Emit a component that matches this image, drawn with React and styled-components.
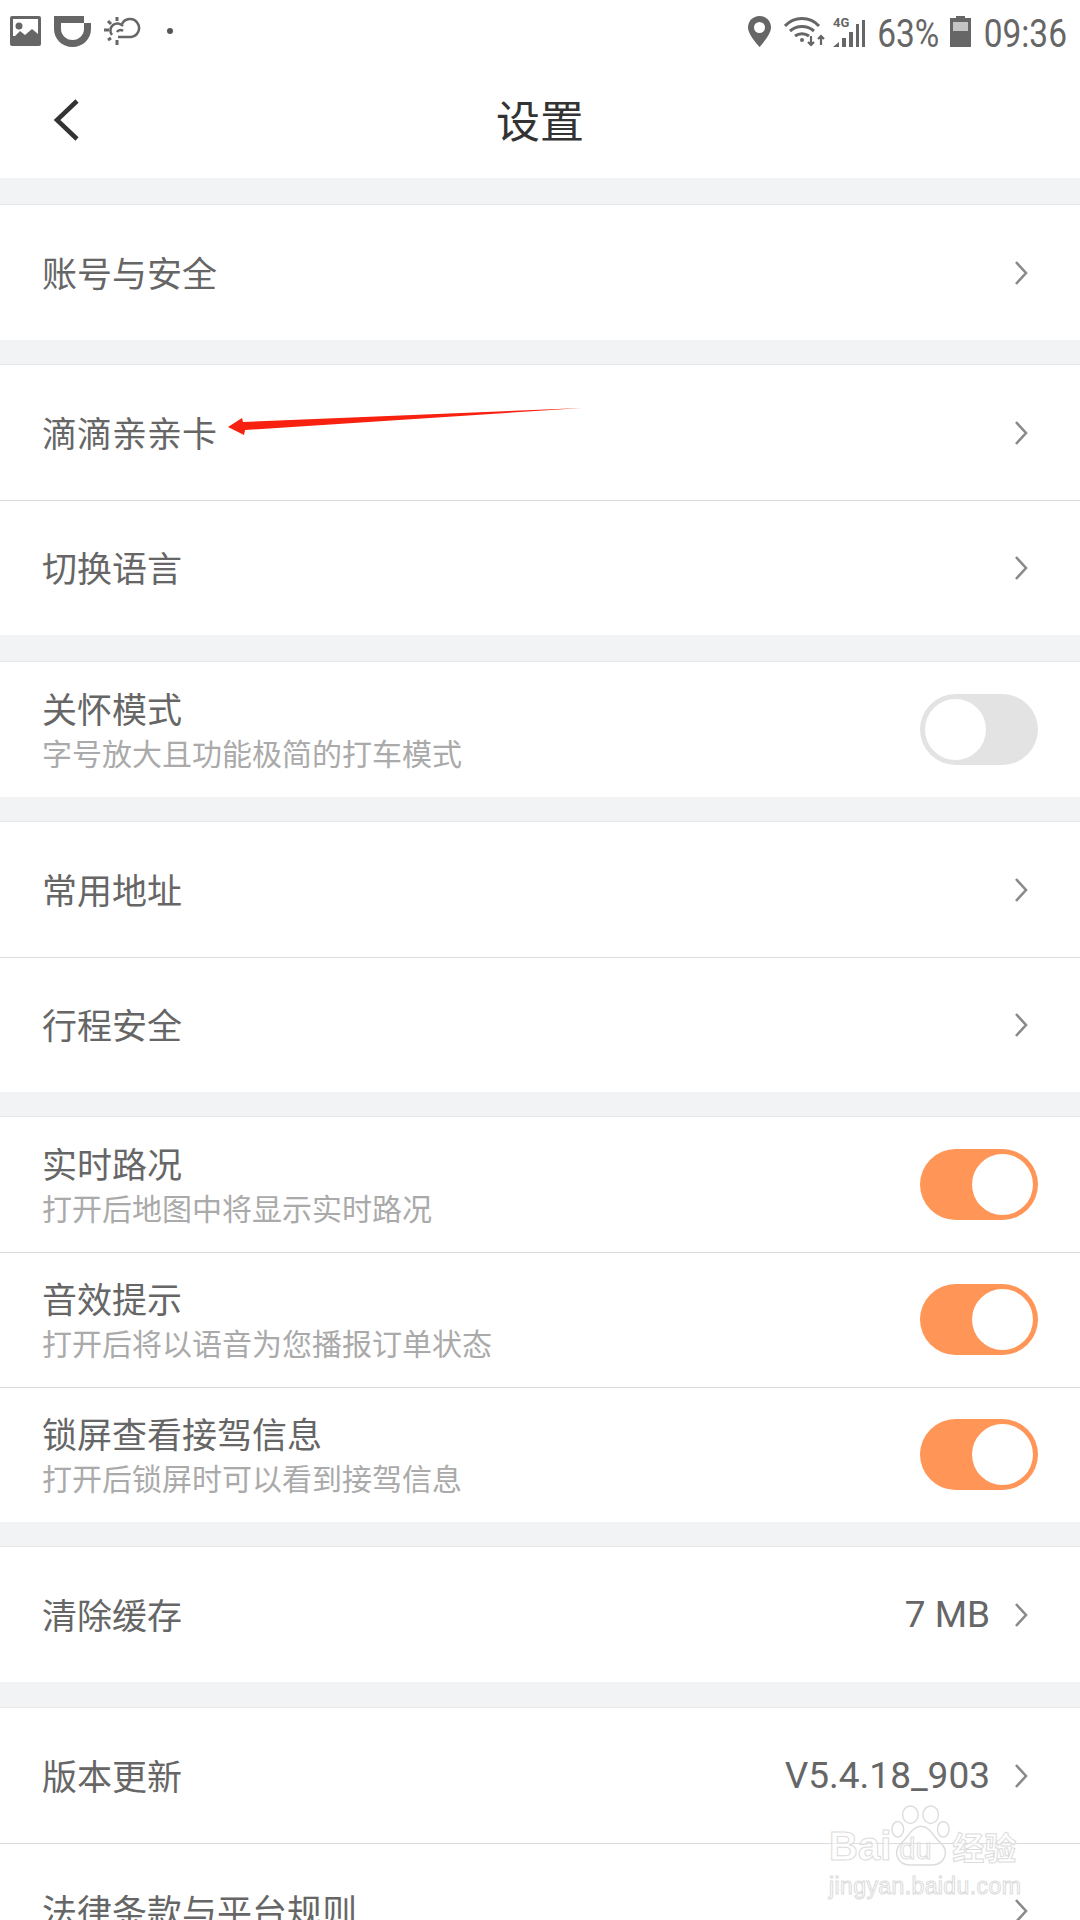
import React from 'react'
import styled, { createGlobalStyle } from 'styled-components'

const GlobalStyle = createGlobalStyle`
  html, body { margin: 0; padding: 0; background: #fff; }
  body { font-family: "Noto Sans CJK SC", "Noto Sans", sans-serif; }
`

const Page = styled.div`
  position: relative;
  width: 1080px;
  height: 1920px;
  overflow: hidden;
  background: #f2f3f5;
`
const Top = styled.div`
  background: #fff;
  height: 178px;
`
const StatusBar = styled.div`
  height: 62px;
  display: flex;
  justify-content: space-between;
  align-items: center;
  padding: 0 12px 0 10px;
`
const StatusGroup = styled.div`
  display: flex;
  align-items: center;
  gap: ${({ $gap }) => $gap}px;
`
const StatusText = styled.span`
  font-family: Roboto, sans-serif;
  font-size: 38px;
  line-height: 40px;
  color: #666;
  display: inline-block;
  transform: scaleX(0.88);
  margin: 5px -5px 0;
`
const NavBar = styled.div`
  position: relative;
  height: 116px;
  display: flex;
  align-items: center;
  justify-content: center;
`
const BackIcon = styled.svg`
  position: absolute;
  left: 52px;
  top: 36px;
`
const Title = styled.h1`
  margin: 0;
  font-size: 44px;
  font-weight: 400;
  color: #333;
  position: relative;
  top: -1px;
`
const Group = styled.section`
  margin-top: ${({ $gap }) => $gap || 26}px;
  background: #fff;
  border-top: 1px solid #e8e8e8;
  margin-bottom: -1px;
`
const Row = styled.div`
  box-sizing: border-box;
  height: 135px;
  padding: 0 52px 0 42px;
  display: flex;
  align-items: center;
  justify-content: space-between;
  & + & { box-shadow: inset 0 1px 0 #dcdcdc; }
`
const Texts = styled.div`
  display: flex;
  flex-direction: column;
  padding-bottom: 1px;
`
const Label = styled.div`
  font-size: 35px;
  line-height: 46px;
  color: #666;
`
const Sub = styled.div`
  font-size: 30px;
  line-height: 43px;
  color: #aaa;
`
const Right = styled.div`
  display: flex;
  align-items: center;
  gap: 24px;
`
const Value = styled.span`
  font-family: Roboto, sans-serif;
  font-size: 37px;
  color: #666;
`
const Chevron = styled.svg`
  display: block;
  width: 14px;
  height: 26px;
`
const Toggle = styled.div`
  box-sizing: border-box;
  margin-right: -10px;
  width: 118px;
  height: 71px;
  padding: 5px;
  border-radius: 36px;
  display: flex;
  justify-content: ${({ $on }) => ($on ? 'flex-end' : 'flex-start')};
  background: ${({ $on }) => ($on ? '#ff9557' : '#e3e3e3')};
`
const Knob = styled.div`
  width: 61px;
  height: 61px;
  border-radius: 50%;
  background: #fff;
`
const Arrow = styled.svg`
  position: absolute;
  left: 225px;
  top: 404px;
`
const Watermark = styled.div`
  position: absolute;
  left: 829px;
  top: 1804px;
  width: 196px;
  color: rgba(255, 255, 255, 0.6);
  -webkit-text-stroke: 1px #dcdcdc;
  font-family: "Liberation Sans", sans-serif;
`
const MarkRow = styled.div`
  display: flex;
  align-items: flex-end;
  height: 64px;
  font-size: 40px;
  line-height: 44px;
  font-weight: 700;
`
const Paw = styled.div`
  position: relative;
  width: 60px;
  height: 64px;
  margin-right: 1px;
`
const PawText = styled.span`
  position: absolute;
  left: 8px;
  bottom: 2px;
  font-size: 29px;
  line-height: 34px;
  font-weight: 400;
`
const MarkCn = styled.span`
  font-family: "Noto Sans CJK SC", sans-serif;
  font-size: 32px;
  font-weight: 700;
  white-space: nowrap;
`
const MarkUrl = styled.div`
  margin-top: 4px;
  font-size: 23px;
  line-height: 28px;
  letter-spacing: 0.4px;
`

const groups = [
  { rows: [{ label: '账号与安全' }] },
  { gap: 25, rows: [{ label: '滴滴亲亲卡' }, { label: '切换语言' }] },
  { gap: 27, rows: [{ label: '关怀模式', sub: '字号放大且功能极简的打车模式', on: false }] },
  { gap: 25, rows: [{ label: '常用地址' }, { label: '行程安全' }] },
  {
    gap: 25,
    rows: [
      { label: '实时路况', sub: '打开后地图中将显示实时路况', on: true },
      { label: '音效提示', sub: '打开后将以语音为您播报订单状态', on: true },
      { label: '锁屏查看接驾信息', sub: '打开后锁屏时可以看到接驾信息', on: true },
    ],
  },
  { gap: 25, rows: [{ label: '清除缓存', value: '7 MB' }] },
  { rows: [{ label: '版本更新', value: 'V5.4.18_903' }, { label: '法律条款与平台规则' }] },
]

const ChevronIcon = () => (
  <Chevron viewBox="0 0 14 26" fill="none" stroke="#8a8a8a" strokeWidth="2.6">
    <path d="M2 2l10 11L2 24" />
  </Chevron>
)

const StatusIcons = () => (
  <StatusGroup $gap={13}>
    <svg width="31" height="30" viewBox="0 0 31 30">
      <rect width="31" height="30" rx="2" fill="#666" />
      <rect x="3" y="3" width="25" height="17" fill="#fff" />
      <circle cx="9" cy="10" r="3.5" fill="#666" />
      <path d="M3 22l7-7 5 4 7-6 6 5v8H3z" fill="#666" />
    </svg>
    <svg width="37" height="31" viewBox="0 0 37 31">
      <path d="M0 0h30v7h7v6C37 23 29 31 18.500 31S0 23 0 13z" fill="#666" />
      <path d="M7 7h23v6c0 6-5 11-11.500 11S7 19 7 13z" fill="#fff" />
    </svg>
    <svg width="37" height="28" viewBox="0 0 37 28" fill="none" stroke="#666" strokeWidth="2.500">
      <path d="M14 20h13a9 9 0 1 0-9-13" />
      <path d="M19 9a7 7 0 0 0-11 9" />
      <path d="M13 15a4 4 0 0 1 6-1" />
      <path d="M13 0v4M13 23v5M0 13h5M4 4l3 3M4 23l3-2" strokeWidth="3" />
    </svg>
    <svg width="6" height="6" style={{ marginLeft: 13 }}>
      <circle cx="3" cy="3" r="3" fill="#555" />
    </svg>
  </StatusGroup>
)

const SystemIcons = () => (
  <StatusGroup $gap={12}>
    <svg width="23" height="31" viewBox="0 0 23 31" style={{ marginRight: 1 }}>
      <path d="M11.500 0C5 0 0 5 0 11.500 0 19 11.500 31 11.500 31S23 19 23 11.500C23 5 18 0 11.500 0z" fill="#666" />
      <circle cx="11.500" cy="11.500" r="5.500" fill="#fff" />
    </svg>
    <svg width="43" height="31" viewBox="0 0 43 31" fill="none" stroke="#666" strokeWidth="3">
      <path d="M1 10C10 0 26 0 35 10" />
      <path d="M6 15c7-6 17-6 24 0" />
      <path d="M11 20c4-3 10-3 14 0" />
      <circle cx="18" cy="24" r="2" fill="#666" stroke="none" />
      <path d="M27 20v9M24 26l3 3 3-3M37 29v-9M34 23l3-3 3 3" strokeWidth="2.200" />
    </svg>
    <svg width="33" height="31" viewBox="0 0 33 31" style={{ marginLeft: -6 }}>
      <text x="0" y="11" fontFamily="Roboto, sans-serif" fontSize="13" fontWeight="700" fill="#666">4G</text>
      <path d="M0 31l6-5v5zM9 31v-9h4v9zM16 31V16h4v15zM23 31V8h3v23zM29 31V4h3v27z" fill="#666" />
    </svg>
    <StatusText>63%</StatusText>
    <svg width="21" height="31" viewBox="0 0 21 31">
      <path d="M6 0h9v2h6v29H0V2h6z" fill="#666" />
      <rect x="3" y="6" width="15" height="9" fill="#c4c4c4" />
    </svg>
    <StatusText>09:36</StatusText>
  </StatusGroup>
)

const App = () => (
  <Page>
    <GlobalStyle />
    <Top>
      <StatusBar>
        <StatusIcons />
        <SystemIcons />
      </StatusBar>
      <NavBar>
        <BackIcon width="28" height="44" viewBox="0 0 28 44" fill="none" stroke="#333" strokeWidth="4.500">
          <path d="M25 3L5 22l20 19" />
        </BackIcon>
        <Title>设置</Title>
      </NavBar>
    </Top>

    {groups.map((group, i) => (
      <Group key={i} $gap={group.gap}>
        {group.rows.map((row) => (
          <Row key={row.label}>
            <Texts>
              <Label>{row.label}</Label>
              {row.sub && <Sub>{row.sub}</Sub>}
            </Texts>
            {row.on !== undefined ? (
              <Toggle $on={row.on}>
                <Knob />
              </Toggle>
            ) : (
              <Right>
                {row.value && <Value>{row.value}</Value>}
                <ChevronIcon />
              </Right>
            )}
          </Row>
        ))}
      </Group>
    ))}

    <Arrow width="360" height="34" viewBox="0 0 360 34">
      <path d="M3 23L17 14 18 18 357 4 20 26 19 31z" fill="#f8200f" />
    </Arrow>

    <Watermark>
      <MarkRow>
        <span>Bai</span>
        <Paw>
          <svg width="60" height="64" viewBox="0 0 62 64" fill="none" stroke="#dcdcdc" strokeWidth="1.500">
            <ellipse cx="20" cy="10" rx="8" ry="9" />
            <ellipse cx="41" cy="10" rx="8" ry="9" />
            <ellipse cx="7" cy="25" rx="6" ry="8" />
            <ellipse cx="54" cy="25" rx="6" ry="8" />
            <path d="M31 22C22 22 18 33 10 40 2 48 6 62 20 62h22c14 0 18-14 10-22-8-7-12-18-21-18z" />
          </svg>
          <PawText>du</PawText>
        </Paw>
        <MarkCn>经验</MarkCn>
      </MarkRow>
      <MarkUrl>jingyan.baidu.com</MarkUrl>
    </Watermark>
  </Page>
)

export default App
